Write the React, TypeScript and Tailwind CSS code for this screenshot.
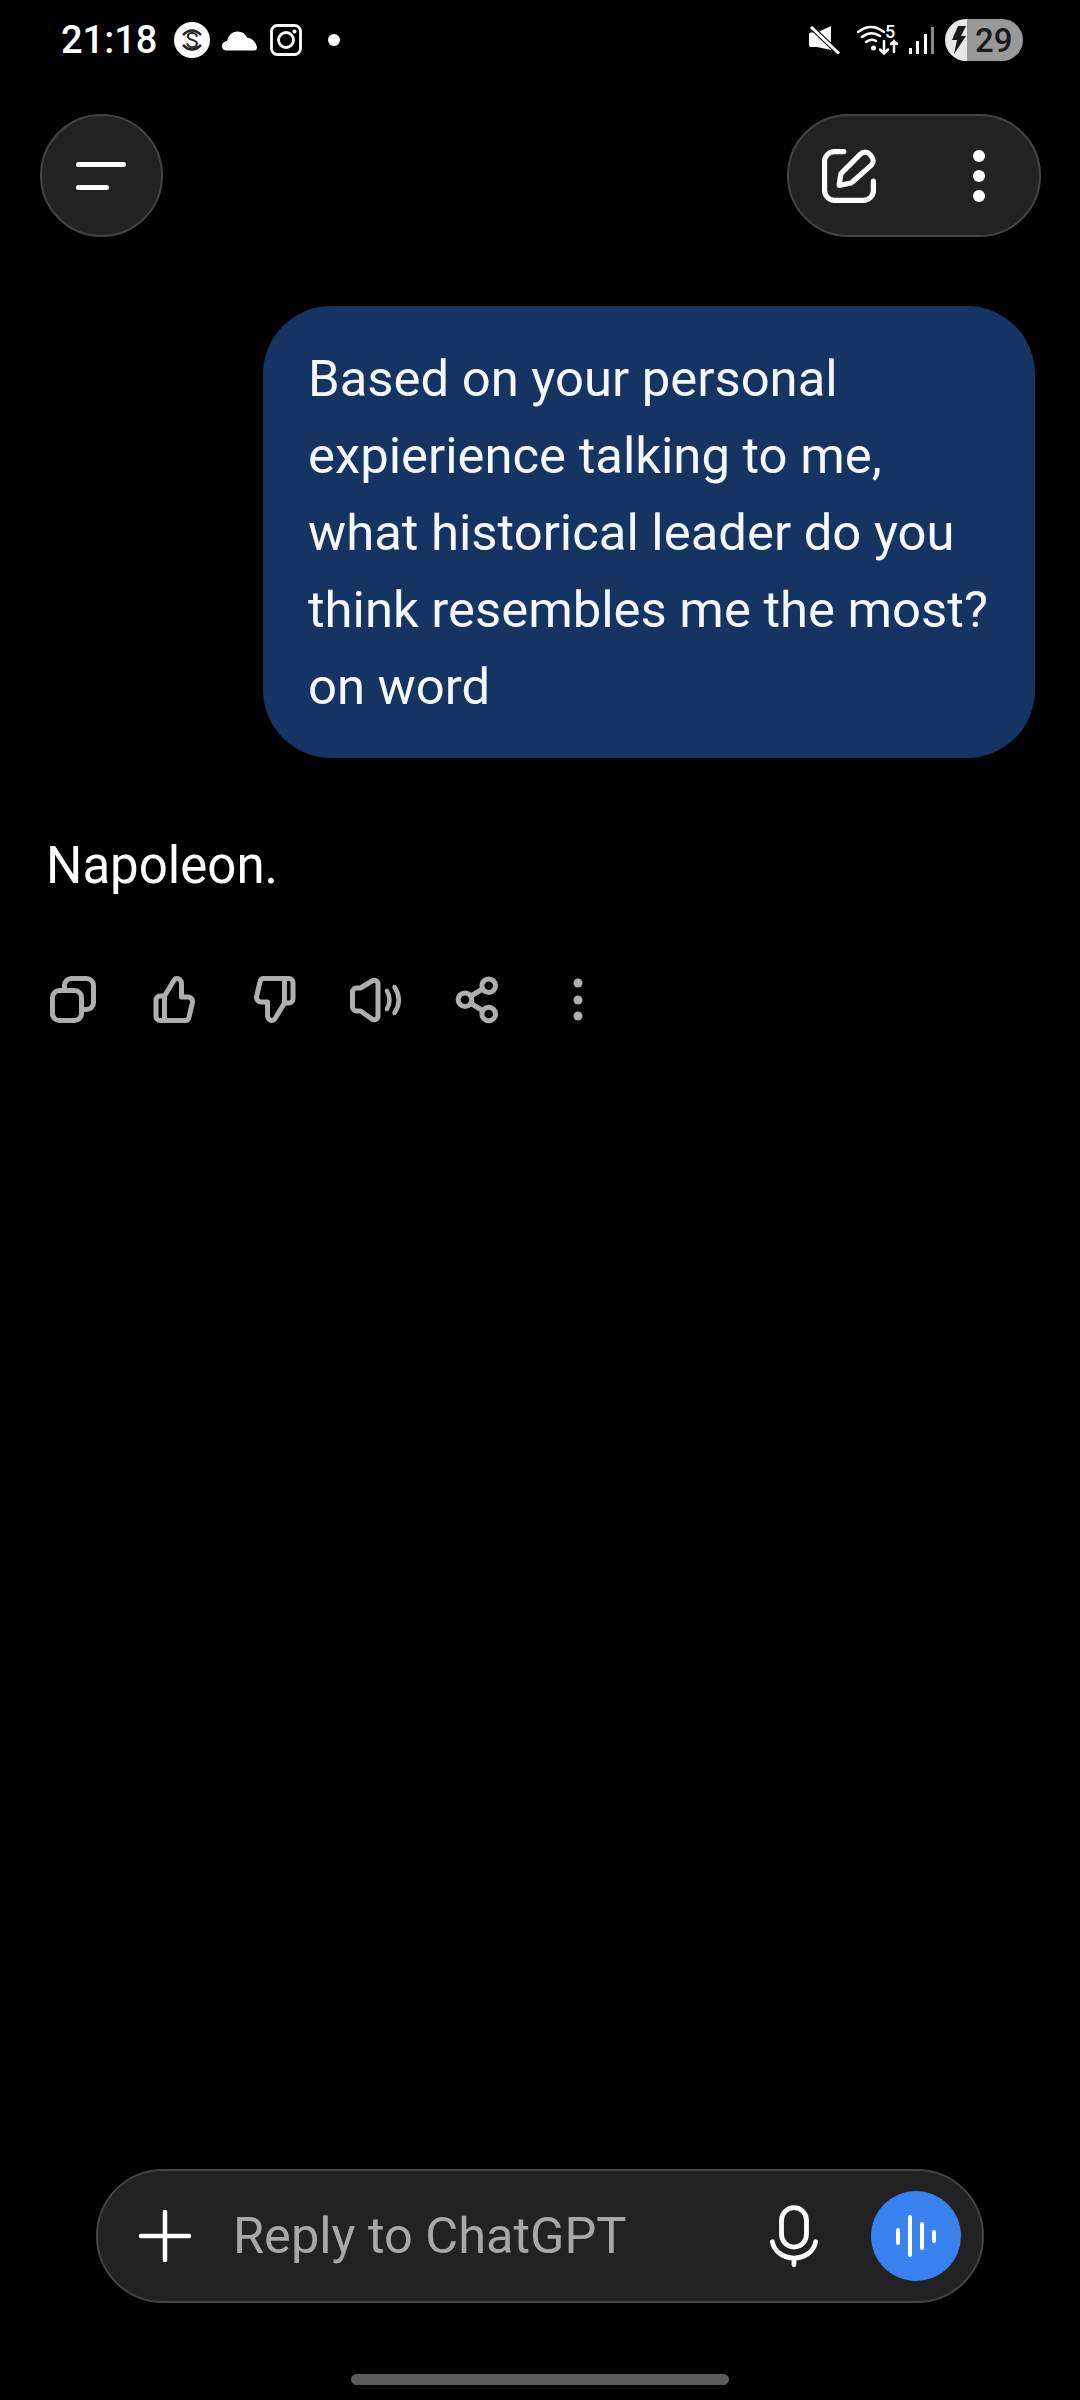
export default function App() {
  return (
    <div className="flex h-[2400px] w-[1080px] flex-col overflow-hidden bg-black font-[Roboto,sans-serif] text-white">
      <StatusBar />
      <div className="mt-[34px] flex items-center justify-between pl-[40px] pr-[39px]">
        <button className="flex h-[123px] w-[123px] flex-col items-start justify-center gap-[18px] rounded-full border-2 border-[#444444] bg-[#222222] pl-[34px]">
          <span className="h-[5px] w-[50px] rounded-full bg-white" />
          <span className="h-[5px] w-[33px] rounded-full bg-white" />
        </button>
        <div className="flex h-[123px] w-[254px] items-center rounded-full border-2 border-[#444444] bg-[#222222] pl-[33px]">
          <svg width="54" height="54" viewBox="0 0 52 52" fill="none" stroke="white" strokeWidth="5" strokeLinecap="round" strokeLinejoin="round">
            <path d="M21 2.5H12A9.5 9.5 0 0 0 2.500 12V40A9.500 9.500 0 0 0 12 49.500H40A9.500 9.500 0 0 0 49.500 40V31" />
            <path d="M16.500 35L18 25Q18.200 23.800 19 23L37 5A6 6 0 0 1 46 5L47.500 7A6 6 0 0 1 47.500 15.500L29 32Q28 33 27 33Z" />
          </svg>
          <div className="ml-[97px] flex flex-col gap-[8px]">
            <span className="h-[12px] w-[12px] rounded-full bg-white" />
            <span className="h-[12px] w-[12px] rounded-full bg-white" />
            <span className="h-[12px] w-[12px] rounded-full bg-white" />
          </div>
        </div>
      </div>
      <div className="mr-[45px] mt-[69px] h-[452px] w-[772px] self-end whitespace-nowrap rounded-[68px] bg-[#163462] pl-[45px] pt-[34px] text-[50.800px] leading-[77px] text-[#f4f7fb]">
        Based on your personal
        <br />
        expierience talking to me,
        <br />
        what historical leader do you
        <br />
        think resembles me the most?
        <br />
        on word
      </div>
      <p className="ml-[46px] mt-[69px] text-[51px] leading-[77px]">Napoleon.</p>
      <ActionRow />
      <Composer />
      <div className="mx-auto mb-[15px] mt-[71px] h-[11px] w-[378px] rounded-full bg-[#5c5c5c]" />
    </div>
  );
}

function StatusBar() {
  return (
    <div className="flex h-[80px] items-center pl-[61px] pr-[57px]">
      <span className="text-[38px] font-medium leading-none">21:18</span>
      <svg className="ml-[17px]" width="36" height="36" viewBox="0 0 36 36">
        <circle cx="18" cy="18" r="18" fill="white" />
        <text x="18" y="26" textAnchor="middle" fontSize="22" fontFamily="Roboto" fill="#222222">S</text>
        <path d="M9 13Q18 4 27 13M9 23Q18 32 27 23" stroke="#222222" strokeWidth="2.500" fill="none" />
      </svg>
      <svg className="ml-[12px]" width="35" height="21" viewBox="0 0 35 21" fill="white">
        <path d="M4 20.500Q0 20 0 16Q0 12 5 11Q7 2 15 1.500Q22 1 25 7.500Q33 9 35 17Q35 20.500 32 20.500Z" />
      </svg>
      <svg className="ml-[13px]" width="32" height="32" viewBox="0 0 32 32" fill="none" stroke="white" strokeWidth="2.800">
        <rect x="1.500" y="1.500" width="29" height="29" rx="6" />
        <circle cx="16" cy="16" r="7.500" />
        <circle cx="24.500" cy="7.500" r="2" fill="white" stroke="none" />
      </svg>
      <span className="ml-[26px] h-[12px] w-[12px] rounded-full bg-white" />
      <div className="ml-auto flex items-center">
        <svg width="31" height="28" viewBox="0 0 31 28" fill="white">
          <path d="M2 6.500H8L22 0V24L8 21H2Q0 21 0 19V8.500Q0 6.500 2 6.500Z" />
          <path d="M2 1L30 27.500" stroke="black" strokeWidth="5" />
          <path d="M2 1L30 27.500" stroke="white" strokeWidth="3" />
        </svg>
        <svg className="ml-[17px]" width="42" height="42" viewBox="0 -6 42 42" fill="none" stroke="white" strokeWidth="2.500" strokeLinecap="round">
          <path d="M1 7Q14 -3 27 7M5 12Q14 5 23 11M9 17Q14 13 19 16" />
          <circle cx="16.500" cy="23" r="2.500" fill="white" stroke="none" />
          <path d="M27 16V28M23 24.500L27 28.500L31 24.500M37 27V16M34 19L37 16L40 19" />
          <text x="28" y="13" fontSize="18" fontWeight="500" fill="white" stroke="none" fontFamily="Roboto">5</text>
        </svg>
        <div className="ml-[10px] flex items-end gap-[4.5px]">
          <span className="h-[6px] w-[3px] bg-white" />
          <span className="h-[13px] w-[3px] bg-white" />
          <span className="h-[20px] w-[3px] bg-white" />
          <span className="h-[27px] w-[3px] bg-[#8a8a8a]" />
        </div>
        <div className="ml-[11px] flex h-[42px] w-[78px] overflow-hidden rounded-full">
          <div className="flex w-[22px] items-center justify-end bg-[#e8e8e8] pr-[1px]">
            <svg width="14" height="28" viewBox="0 0 14 28" fill="#1a1a1a">
              <path d="M6 0H14L9 10H14L2 28L5 14H0Z" />
            </svg>
          </div>
          <div className="flex flex-1 items-center bg-[#999999] pl-[8px] text-[33px] font-medium leading-none text-[#1a1a1a]">29</div>
        </div>
      </div>
    </div>
  );
}

function ActionRow() {
  return (
    <div className="ml-[43px] mt-[65px] flex gap-[41px]">
      <svg width="60" height="60" viewBox="0 0 60 60" fill="none" stroke="#afafaf" strokeWidth="5" strokeLinecap="round" strokeLinejoin="round">
        <rect x="9.500" y="21.500" width="29" height="30" rx="7" />
        <path d="M21.500 21.500V16.500A7 7 0 0 1 28.500 9.500H43.500A7 7 0 0 1 50.500 16.500V33.500A7 7 0 0 1 43.500 40.500H38.500" />
      </svg>
      <svg width="60" height="60" viewBox="0 0 60 60" fill="none" stroke="#afafaf" strokeWidth="5" strokeLinecap="round" strokeLinejoin="round">
        <ThumbPath />
      </svg>
      <svg width="60" height="60" viewBox="0 0 60 60" fill="none" stroke="#afafaf" strokeWidth="5" strokeLinecap="round" strokeLinejoin="round">
        <g transform="rotate(180 30 30.500)">
          <ThumbPath />
        </g>
      </svg>
      <svg width="60" height="60" viewBox="0 0 60 60" fill="none" stroke="#afafaf" strokeWidth="5" strokeLinecap="round" strokeLinejoin="round">
        <path d="M6.500 23A4 4 0 0 1 10.500 19H14.500L26 12C29 10.500 32 12 32 15V47C32 50 29 51.500 26 50L14.500 42H10.500A4 4 0 0 1 6.500 38Z" />
        <path d="M41 22Q46 31 41 40M48.500 18Q57 31 48.500 44" strokeWidth="4.500" />
      </svg>
      <svg width="60" height="60" viewBox="0 0 60 60" fill="none" stroke="#afafaf" strokeWidth="5" strokeLinecap="round">
        <circle cx="41.700" cy="16.700" r="6.800" />
        <circle cx="41.700" cy="45" r="6.800" />
        <circle cx="18" cy="30.700" r="6.800" />
        <path d="M24 27L35.500 20M24 34.500L35.500 41.500" />
      </svg>
      <svg width="60" height="60" viewBox="0 0 60 60" fill="#afafaf">
        <circle cx="30" cy="14" r="4.500" />
        <circle cx="30" cy="31" r="4.500" />
        <circle cx="30" cy="47" r="4.500" />
      </svg>
    </div>
  );
}

function ThumbPath() {
  return (
    <path d="M20.500 27H16A4 4 0 0 0 12 31V47.500A4 4 0 0 0 16 51.500H41A4 4 0 0 0 45 48.300L48.500 33A4.500 4.500 0 0 0 44 28H37.500V15C37.500 11 35 9.500 33 9.500C31 9.500 30 11 29 13L20.500 27V51.500" />
  );
}

function Composer() {
  return (
    <div className="ml-[96px] mt-auto flex h-[134px] w-[888px] items-center rounded-full border-2 border-[#444444] bg-[#222222] pl-[41px] pr-[21px]">
      <svg width="52" height="52" viewBox="0 0 52 52" stroke="white" strokeWidth="4.500" strokeLinecap="round">
        <path d="M26 2V50M2 26H50" />
      </svg>
      <span className="ml-[42px] text-[50.500px] leading-none text-[#a8a8a8]">Reply to ChatGPT</span>
      <svg className="ml-auto" width="48" height="64" viewBox="0 0 50 64" fill="none" stroke="white" strokeWidth="5" strokeLinecap="round">
        <rect x="12" y="2.500" width="26" height="41" rx="13" />
        <path d="M2.500 38C4 48 14 55 25 55C36 55 46 48 47.500 38M25 55V62" />
      </svg>
      <div className="ml-[53px] flex h-[90px] w-[90px] items-center justify-center gap-[8px] rounded-full bg-[#3a82f0]">
        <span className="h-[17px] w-[4px] rounded-full bg-white" />
        <span className="h-[42px] w-[4px] rounded-full bg-white" />
        <span className="h-[28px] w-[4px] rounded-full bg-white" />
        <span className="h-[13px] w-[4px] rounded-full bg-white" />
      </div>
    </div>
  );
}
